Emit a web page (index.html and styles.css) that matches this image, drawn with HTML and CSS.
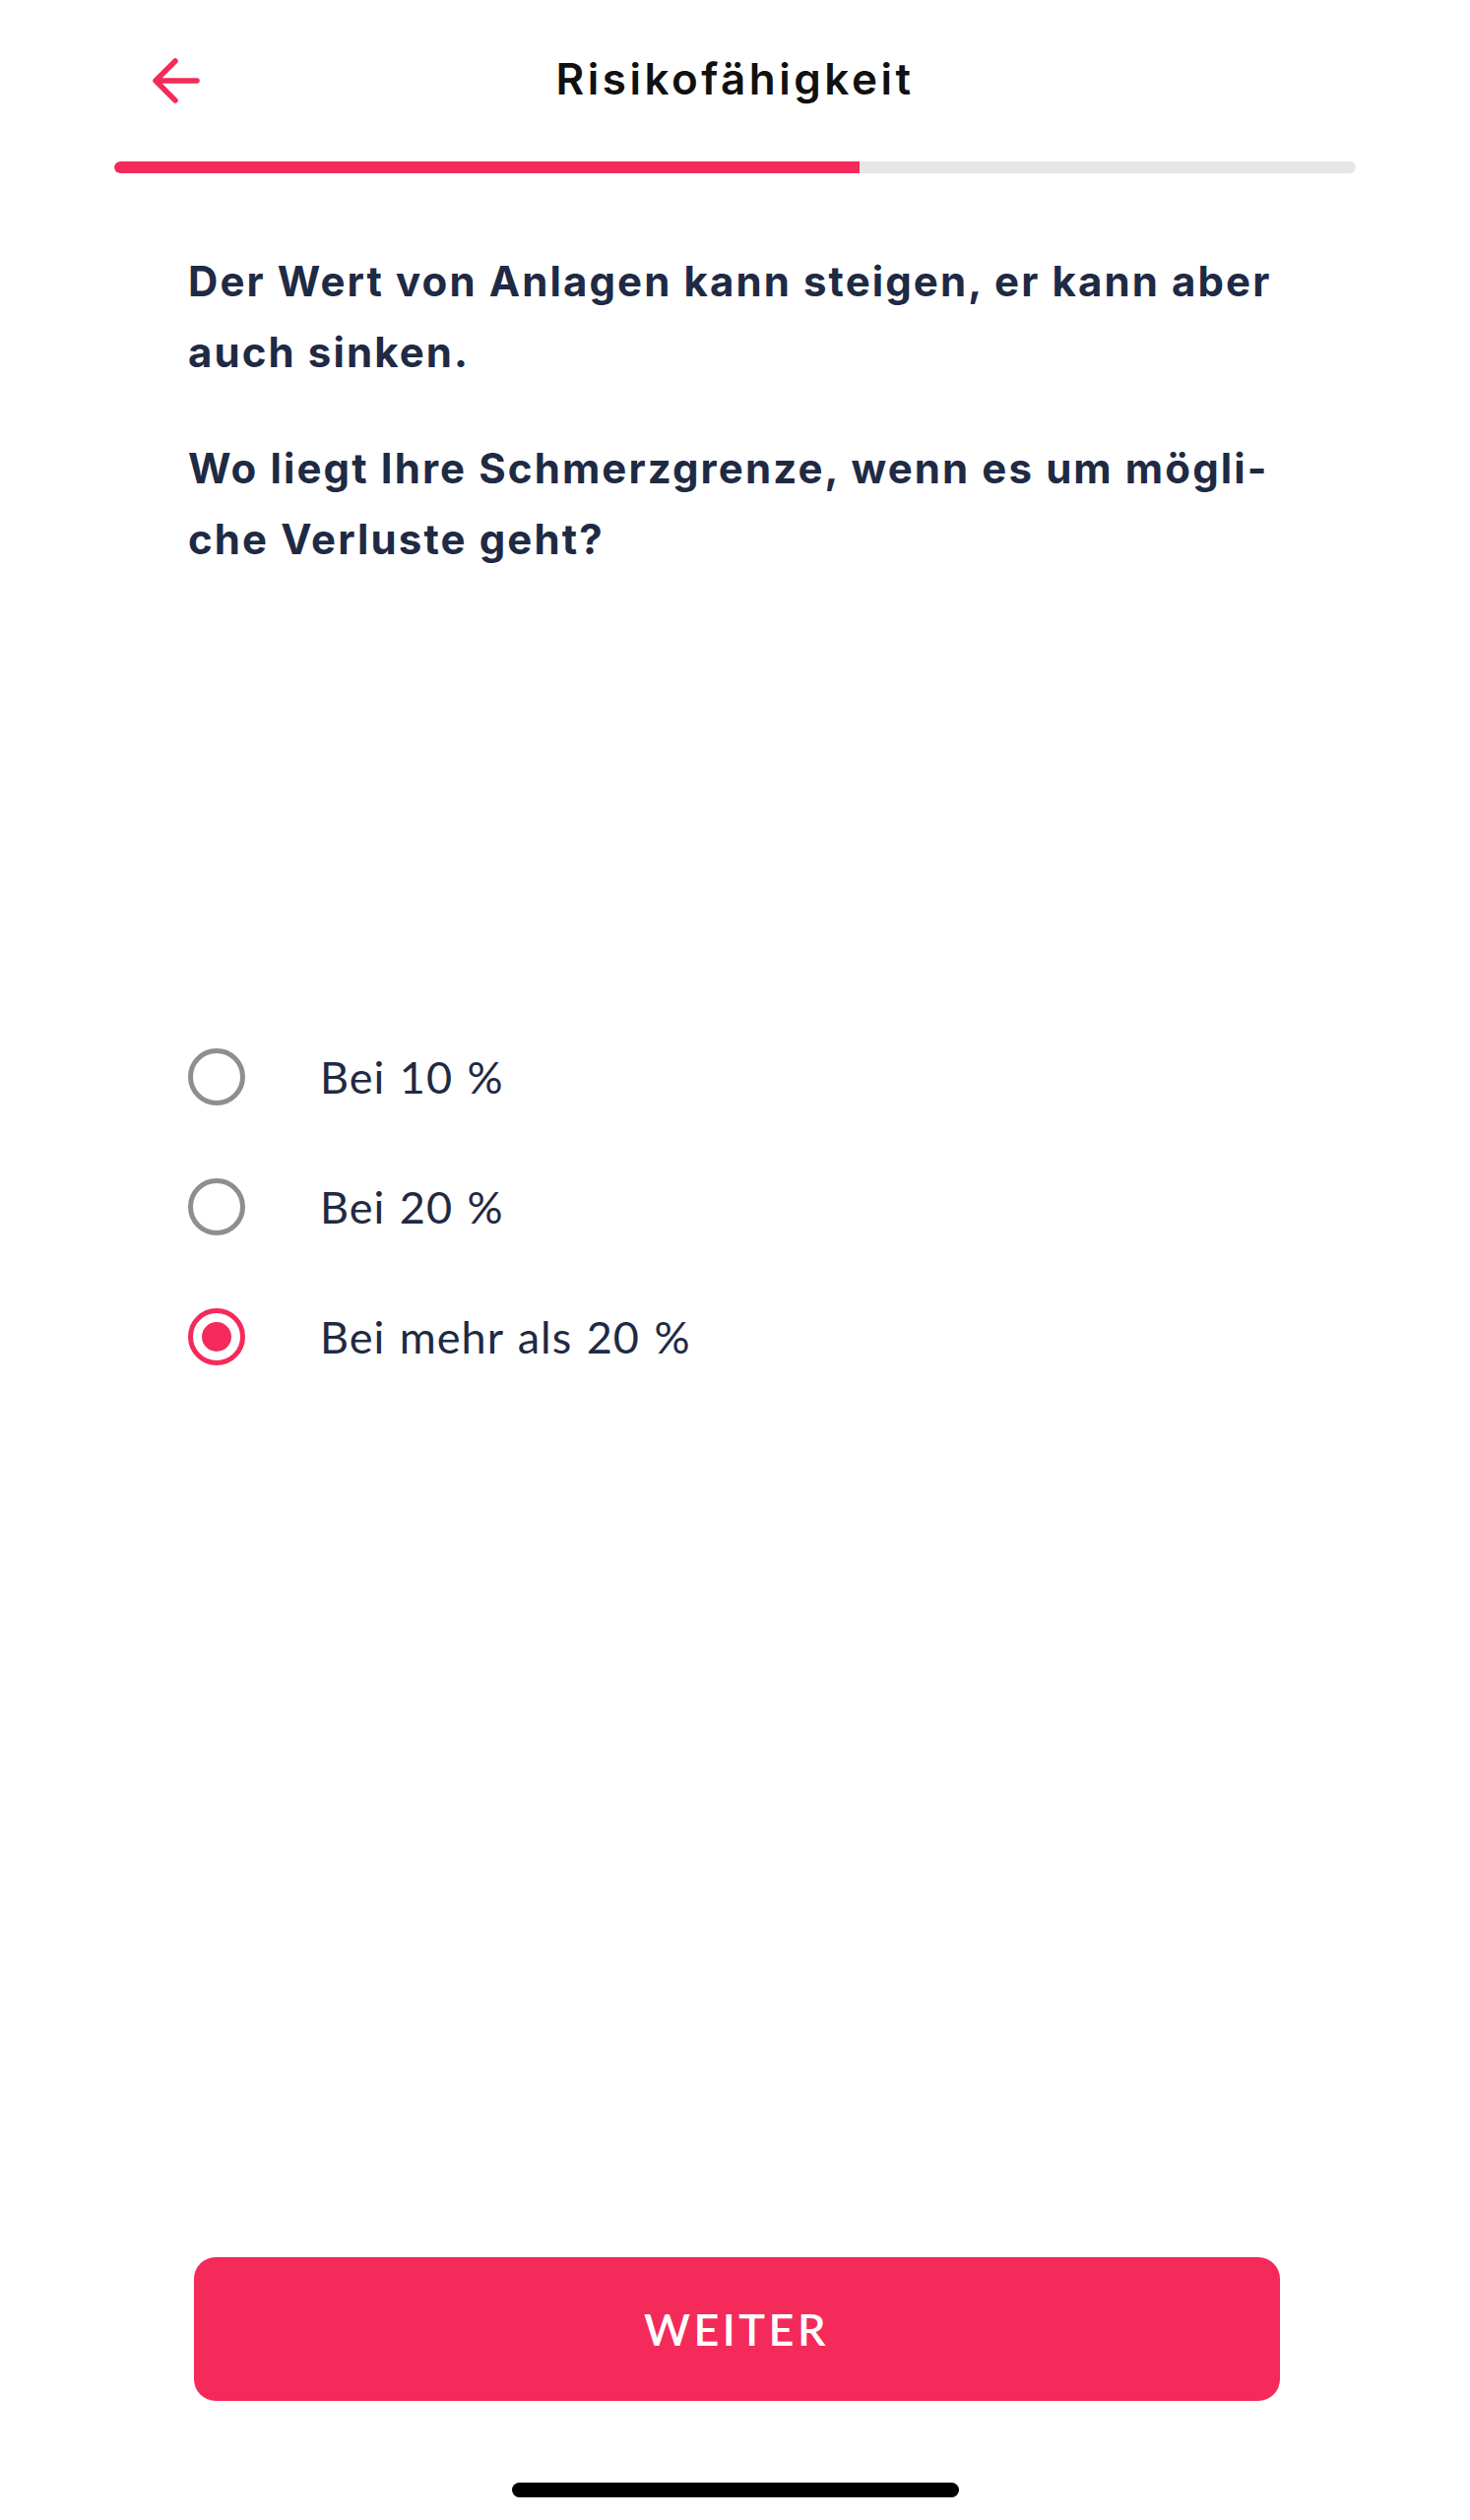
FILE: index.html
```html
<!DOCTYPE html>
<html lang="de">
<head>
<meta charset="utf-8">
<title>Risikofähigkeit</title>
<link rel="stylesheet" href="styles.css">
</head>
<body>
<div class="screen">
  <header class="topbar">
    <button class="back" aria-label="Zurück">
      <svg width="50" height="46" viewBox="0 0 50 46" fill="none" stroke="#F42A5B" stroke-width="5.5" stroke-linecap="round" stroke-linejoin="round">
        <path d="M4 23 L24 3 M4 23 L24 43 M4 23 H46"/>
      </svg>
    </button>
    <h1 class="title">Risikofähigkeit</h1>
  </header>
  <div class="progress"><div class="progress-fill" style="width:60%"></div></div>

  <main class="content">
    <p class="question">Der Wert von Anlagen kann steigen, er kann aber<br>auch sinken.</p>
    <p class="question">Wo liegt Ihre Schmerzgrenze, wenn es um mögli-<br>che Verluste geht?</p>

    <ul class="options">
      <li class="option"><span class="radio"></span><span class="label">Bei 10 %</span></li>
      <li class="option"><span class="radio"></span><span class="label">Bei 20 %</span></li>
      <li class="option selected"><span class="radio"></span><span class="label">Bei mehr als 20 %</span></li>
    </ul>
  </main>

  <footer class="footer">
    <button class="cta">WEITER</button>
    <div class="home-indicator"></div>
  </footer>
</div>
</body>
</html>
```
FILE: styles.css
```css
* { box-sizing: border-box; }
html, body { margin: 0; padding: 0; background: #ffffff; }
body { font-family: "Lato", "Noto Sans", sans-serif; color: #1F2A44; }

.screen {
  width: 1493px;
  height: 2560px;
  display: flex;
  flex-direction: column;
}

.topbar {
  position: relative;
  height: 164px;
  display: flex;
  align-items: center;
  justify-content: center;
}
.back {
  position: absolute;
  left: 154px;
  top: 59px;
  width: 50px;
  height: 46px;
  padding: 0;
  border: 0;
  background: none;
  display: flex;
}
.title {
  margin: 0 0 4px 0;
  font-family: "Inter", "Liberation Sans", sans-serif;
  font-weight: 600;
  font-size: 44px;
  letter-spacing: 3.5px;
  color: #111111;
  line-height: 1;
}

.progress {
  margin: 0 116px;
  height: 12px;
  border-radius: 6px;
  background: #E6E6E6;
  overflow: hidden;
}
.progress-fill {
  height: 100%;
  background: #F42A5B;
  border-radius: 6px 0 0 6px;
}

.content {
  flex: 1;
  padding: 74px 191px 0 191px;
}
.question {
  margin: 0 0 46px 0;
  font-family: "Inter", "Lato", sans-serif;
  font-weight: 700;
  font-size: 42px;
  line-height: 72px;
  letter-spacing: 2.1px;
  white-space: nowrap;
  color: #1F2A44;
}

.options {
  list-style: none;
  margin: 0;
  padding: 0;
  padding-top: 435px;
  display: flex;
  flex-direction: column;
  gap: 74px;
}
.option {
  display: flex;
  align-items: center;
  height: 58px;
}
.radio {
  width: 58px;
  height: 58px;
  border-radius: 50%;
  border: 5px solid #8E8E8E;
  flex: none;
  display: flex;
  align-items: center;
  justify-content: center;
}
.option.selected .radio { border-color: #F42A5B; }
.option.selected .radio::after {
  content: "";
  width: 30px;
  height: 30px;
  border-radius: 50%;
  background: #F42A5B;
}
.label {
  margin-left: 76px;
  font-size: 45px;
  font-weight: 400;
  letter-spacing: 1px;
  word-spacing: 2px;
  color: #1F2A44;
}

.footer {
  display: flex;
  flex-direction: column;
  align-items: center;
  padding-bottom: 23px;
}
.cta {
  width: 1103px;
  height: 146px;
  margin-left: 3px;
  border: 0;
  border-radius: 22px;
  background: #F42A5B;
  color: #ffffff;
  font-family: "Lato", "Noto Sans", sans-serif;
  font-weight: 600;
  font-size: 45px;
  letter-spacing: 3.5px;
}
.home-indicator {
  margin-top: 83px;
  width: 454px;
  height: 15px;
  border-radius: 8px;
  background: #000000;
}
```
